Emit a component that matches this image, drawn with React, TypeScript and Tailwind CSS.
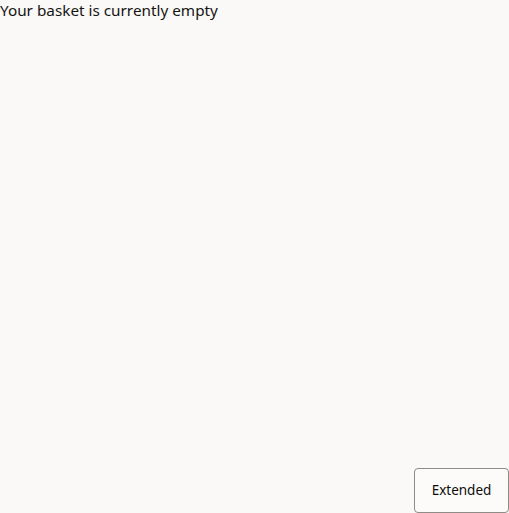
export default function App() {
  return (
    <div className="h-[513px] w-full bg-[#faf9f7] flex flex-col justify-between font-['Noto_Sans',sans-serif] text-[#161513]">
      <p className="text-[15.3px] leading-[20px]">Your basket is currently empty</p>
      <div className="flex justify-end">
        <button className="h-[45px] w-[95px] rounded-[4px] border border-[#8f8b86] bg-[#fcfbfa] text-[13.5px] font-normal text-[#0d0c0b]">
          Extended
        </button>
      </div>
    </div>
  )
}
